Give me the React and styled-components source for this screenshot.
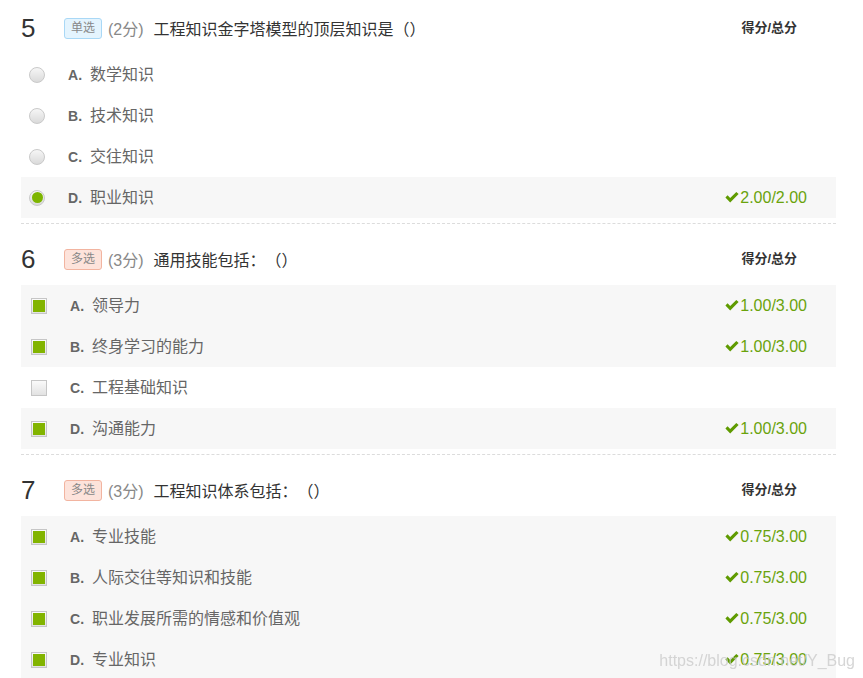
import React from 'react'
import styled, { createGlobalStyle } from 'styled-components'

const questions = [
    {
        no: 5, type: 'single', points: 2, title: '工程知识金字塔模型的顶层知识是（）',
        options: [
            { key: 'A', text: '数学知识' },
            { key: 'B', text: '技术知识' },
            { key: 'C', text: '交往知识' },
            { key: 'D', text: '职业知识', checked: true, score: '2.00/2.00' },
        ],
    },
    {
        no: 6, type: 'multi', points: 3, title: '通用技能包括：（）',
        options: [
            { key: 'A', text: '领导力', checked: true, score: '1.00/3.00' },
            { key: 'B', text: '终身学习的能力', checked: true, score: '1.00/3.00' },
            { key: 'C', text: '工程基础知识' },
            { key: 'D', text: '沟通能力', checked: true, score: '1.00/3.00' },
        ],
    },
    {
        no: 7, type: 'multi', points: 3, title: '工程知识体系包括：（）',
        options: [
            { key: 'A', text: '专业技能', checked: true, score: '0.75/3.00' },
            { key: 'B', text: '人际交往等知识和技能', checked: true, score: '0.75/3.00' },
            { key: 'C', text: '职业发展所需的情感和价值观', checked: true, score: '0.75/3.00' },
            { key: 'D', text: '专业知识', checked: true, score: '0.75/3.00' },
        ],
    },
]

const GlobalStyle = createGlobalStyle`
    body{
        margin: 0;
        background: #fff;
        font-family: "Liberation Sans", "Noto Sans CJK SC", sans-serif;
        text-spacing-trim: space-all;
    }
`

const Check = () => (
    <svg width="14" height="11" viewBox="0 0 14 11">
        <path d="M0.4 5.4 L2.6 3.3 L5.2 5.9 L11.3 0 L13.6 2.1 L5.2 10.4 Z" fill="#5f9b00" />
    </svg>
)

const App = () => {
    return (
        <PageStyled>
            <GlobalStyle />
            {questions.map((q, i) => (
                <div className="question" key={q.no}>
                    <header>
                        <span className="num">{q.no}</span>
                        <Badge type={q.type}>{q.type === 'single' ? '单选' : '多选'}</Badge>
                        <span className="points">({q.points}分)</span>
                        <span className="title">{q.title}</span>
                        <span className="score-label">得分/总分</span>
                    </header>
                    {q.options.map(o => (
                        <OptionRow key={o.key} shaded={o.checked}>
                            {q.type === 'single'
                                ? <Radio checked={o.checked} />
                                : <Box checked={o.checked} />}
                            <div className="label">
                                <span className="letter">{o.key}.</span>
                                <span className="text">{o.text}</span>
                            </div>
                            {o.score && (
                                <span className="score"><Check />{o.score}</span>
                            )}
                        </OptionRow>
                    ))}
                    {i < questions.length - 1 && <div className="divider" />}
                </div>
            ))}
            <div className="watermark">https://blog.csdn.net/Y_Bug</div>
        </PageStyled>
    )
}

const PageStyled = styled.div`
    width: 815px;
    padding: 2px 0 0 21px;
    header{
        height: 52px;
        display: flex;
        align-items: center;
        .num{
            width: 43px;
            font-family: "Liberation Sans", sans-serif;
            font-size: 26px;
            color: #333;
        }
        .points{
            margin-left: 6px;
            font-size: 16px;
            color: #888;
        }
        .title{
            flex: 1;
            margin-left: 10px;
            font-size: 16px;
            color: #333;
        }
        .score-label{
            margin: 0 39px 3px 0;
            font-size: 13px;
            font-weight: bold;
            color: #333;
        }
    }
    .divider{
        margin: 5px 0 9px;
        border-top: 1px dashed #dcdcdc;
    }
    .watermark{
        position: fixed;
        right: 8px;
        bottom: 8px;
        font-size: 16px;
        color: rgba(200, 200, 200, 0.75);
        pointer-events: none;
    }
`

const Badge = styled.span`
    box-sizing: border-box;
    height: 21px;
    line-height: 19px;
    padding: 0 6px;
    font-size: 12px;
    color: #888;
    border-radius: 3px;
    border: 1px solid ${p => p.type === 'single' ? '#a9d8f6' : '#f2b4a0'};
    background-color: ${p => p.type === 'single' ? '#e4f4fe' : '#fde3db'};
`

const OptionRow = styled.div`
    height: 41px;
    display: flex;
    align-items: center;
    background-color: ${p => p.shaded ? '#f7f7f7' : '#fff'};
    .label{
        flex: 1;
        display: flex;
        align-items: baseline;
        margin: 0 0 3px 23px;
    }
    .letter{
        width: 22px;
        font-size: 14px;
        font-weight: bold;
        color: #666;
    }
    .text{
        font-size: 16px;
        color: #666;
    }
    .score{
        display: flex;
        align-items: center;
        gap: 1px;
        margin-right: 29px;
        font-size: 16px;
        color: #6aa30c;
    }
`

const Radio = styled.span`
    box-sizing: border-box;
    width: 16px;
    height: 16px;
    margin-left: 8px;
    border-radius: 50%;
    border: 1px solid #c9c9c9;
    background: linear-gradient(#f6f6f6, #dadada);
    display: flex;
    align-items: center;
    justify-content: center;
    &::after{
        content: '';
        display: ${p => p.checked ? 'block' : 'none'};
        width: 11px;
        height: 11px;
        border-radius: 50%;
        background: #7db500;
    }
`

const Box = styled.span`
    box-sizing: border-box;
    width: 16px;
    height: 16px;
    margin-left: 10px;
    border: 1px solid #c6c6c6;
    background: linear-gradient(#fafafa, #e2e2e2);
    display: flex;
    align-items: center;
    justify-content: center;
    &::after{
        content: '';
        display: ${p => p.checked ? 'block' : 'none'};
        width: 12px;
        height: 12px;
        background: #82b400;
    }
`

export default App
